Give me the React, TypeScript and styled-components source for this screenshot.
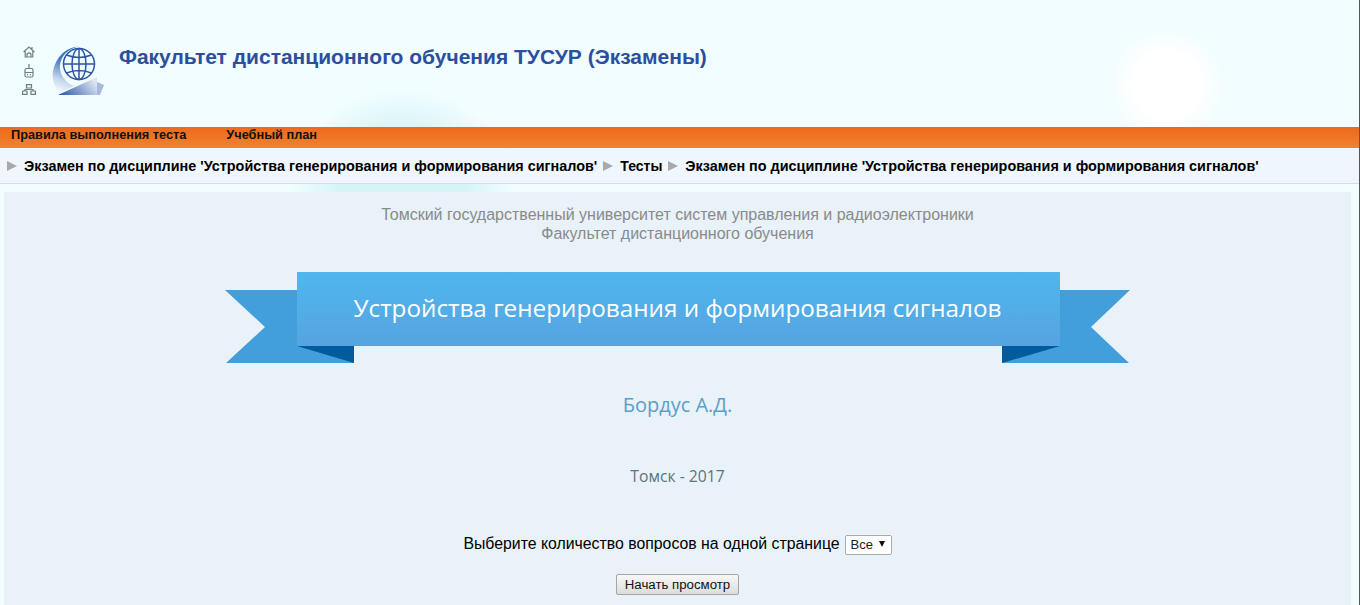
import styled, { createGlobalStyle } from 'styled-components';

const Global = createGlobalStyle`
  html, body {
    margin: 0;
    height: 100%;
    overflow: hidden;
  }
  body {
    font-family: "Liberation Sans", Arial, sans-serif;
    background: #fff;
  }
`;

export default function App() {
  return (
    <Page>
      <Global />
      <Header>
        <QuickLinks>
          <HomeIcon />
          <DeviceIcon />
          <MapIcon />
        </QuickLinks>
        <Logo />
        <Title>Факультет дистанционного обучения ТУСУР (Экзамены)</Title>
      </Header>
      <Menu>
        <MenuLink>Правила выполнения теста</MenuLink>
        <MenuLink>Учебный план</MenuLink>
      </Menu>
      <Crumbs>
        <Arrow />
        <Crumb>Экзамен по дисциплине 'Устройства генерирования и формирования сигналов'</Crumb>
        <Arrow />
        <Crumb $short>Тесты</Crumb>
        <Arrow />
        <Crumb>Экзамен по дисциплине 'Устройства генерирования и формирования сигналов'</Crumb>
      </Crumbs>
      <Panel>
        <University>
          Томский государственный университет систем управления и радиоэлектроники
          <br />
          Факультет дистанционного обучения
        </University>
        <Ribbon>
          <RibbonTails />
          <Banner>Устройства генерирования и формирования сигналов</Banner>
        </Ribbon>
        <Author>Бордус А.Д.</Author>
        <City>Томск - 2017</City>
        <PageSizeRow>
          Выберите количество вопросов на одной странице
          <SelectWrap>
            <PageSizeSelect defaultValue="all">
              <option value="all">Все</option>
              <option value="1">1</option>
              <option value="5">5</option>
              <option value="10">10</option>
            </PageSizeSelect>
            <SelectArrow />
          </SelectWrap>
        </PageSizeRow>
        <StartRow>
          <StartButton type="button">Начать просмотр</StartButton>
        </StartRow>
      </Panel>
    </Page>
  );
}

function HomeIcon() {
  return (
    <svg width="12" height="12" viewBox="0 0 12 12" fill="none" stroke="#6f8080" strokeWidth="1.2">
      <path d="M0.6 6 L6 1 L11.4 6 M2.2 4.8 V11 H9.8 V4.8 M9 1 V4 M4 11 V8 Q6 5.6 8 8 V11" />
    </svg>
  );
}

function DeviceIcon() {
  return (
    <svg width="12" height="14" viewBox="0 0 12 14" fill="none" stroke="#6f8080" strokeWidth="1.2">
      <path d="M6 0 V4 M3.5 4.5 H8.5 Q10 4.5 10 6 V11.5 Q10 13 8.5 13 H3.5 Q2 13 2 11.5 V6 Q2 4.5 3.5 4.5 Z M2 8.5 H10" />
      <path d="M4 10.7 H5 M7 10.7 H8" />
    </svg>
  );
}

function MapIcon() {
  return (
    <svg width="14" height="11" viewBox="0 0 14 11" fill="none" stroke="#6f8080" strokeWidth="1.2">
      <path d="M4.5 0.6 H9.5 V4 H4.5 Z M0.6 7 H5 V10.4 H0.6 Z M9 7 H13.4 V10.4 H9 Z M3 7 V5.5 H11 V7" />
    </svg>
  );
}

function Logo() {
  return (
    <LogoBox>
      <svg width="56" height="54" viewBox="0 0 56 54" fill="none">
        <defs>
          <linearGradient id="crescent" x1="0.6" y1="0" x2="0.4" y2="1">
            <stop offset="0" stopColor="#1a6fb8" />
            <stop offset="0.35" stopColor="#4a7fc0" />
            <stop offset="0.75" stopColor="#c8d8ee" />
            <stop offset="1" stopColor="#f4f8fc" />
          </linearGradient>
          <linearGradient id="book" x1="0" y1="0.8" x2="1" y2="0.4">
            <stop offset="0" stopColor="#2f5cab" />
            <stop offset="1" stopColor="#dfe6f3" />
          </linearGradient>
        </defs>
        <path d="M28 1.5 C12 3 2.5 18 2.7 32 C3 39 6 44 10 48 L24 41 C14 37 9 28 10 20 C11 11 18 4 28 1.5 Z" fill="url(#crescent)" />
        <path d="M8 50 L47 32 V50 Z" fill="url(#book)" />
        <path d="M47 37 L54 40 L50 50 H47 Z" fill="#a9b9da" />
        <g stroke="#2a55a5" strokeWidth="1.5">
          <circle cx="29" cy="19" r="15.5" />
          <ellipse cx="29" cy="19" rx="7" ry="15.5" />
          <path d="M29 3.5 V34.5 M13.5 19 H44.5 M16.5 10 Q29 15 41.5 10 M16.5 28 Q29 23 41.5 28" />
        </g>
      </svg>
    </LogoBox>
  );
}

function RibbonTails() {
  return (
    <TailsArt width="905" height="91" viewBox="0 0 905 91">
      <path d="M0 18 H129 V91 H1 L40 55 Z" fill="#429fdc" />
      <path d="M905 18 H777 V91 H904 L866 55 Z" fill="#429fdc" />
      <path d="M72 74 H129 V91 Z" fill="#015b9c" />
      <path d="M835 74 H777 V91 Z" fill="#015b9c" />
    </TailsArt>
  );
}

const Page = styled.div`
  box-sizing: border-box;
  width: 1360px;
  height: 605px;
  overflow: hidden;
  border-right: 1px solid #555;
  background:
    radial-gradient(ellipse 110px 100px at 402px 190px, #d4f4f6 55%, rgba(212, 244, 246, 0) 100%),
    radial-gradient(circle 60px at 1167px 85px, #fff 55%, rgba(255, 255, 255, 0) 100%),
    #f1fdff;
`;

const Header = styled.header`
  display: flex;
  align-items: flex-start;
  height: 127px;
`;

const QuickLinks = styled.div`
  display: flex;
  flex-direction: column;
  align-items: center;
  gap: 6px;
  width: 14px;
  margin: 46px 0 0 22px;
`;

const LogoBox = styled.div`
  width: 56px;
  height: 54px;
  margin: 45px 0 0 14px;
`;

const Title = styled.h1`
  margin: 45px 0 0 13px;
  font-size: 21px;
  line-height: 24px;
  font-weight: bold;
  color: #2b4f9e;
`;

const Menu = styled.nav`
  display: flex;
  gap: 40px;
  height: 21px;
  padding-left: 11px;
  background: linear-gradient(#ec691f, #f2822e);
`;

const MenuLink = styled.a`
  font-size: 12.75px;
  line-height: 16px;
  font-weight: bold;
  color: #111;
`;

const Crumbs = styled.div`
  display: flex;
  align-items: center;
  gap: 7px;
  box-sizing: border-box;
  height: 36px;
  padding-left: 7px;
  background: #eff6fe;
  border-bottom: 1px solid #d8dce0;
`;

const Arrow = styled.span`
  width: 0;
  height: 0;
  border-style: solid;
  border-width: 5px 0 5px 10px;
  border-color: transparent transparent transparent #a9a9a9;
`;

const Crumb = styled.a<{ $short?: boolean }>`
  font-size: ${(p) => (p.$short ? '14px' : '14.4px')};
  font-weight: bold;
  color: #000;
  margin-right: -1px;
`;

const Panel = styled.main`
  height: 413px;
  margin: 8px 8px 0 4px;
  background: #e9f2f8;
  display: flex;
  flex-direction: column;
  align-items: center;
`;

const University = styled.div`
  margin-top: 13px;
  font-size: 16px;
  line-height: 19px;
  text-align: center;
  color: #8a8a8a;
`;

const Ribbon = styled.div`
  position: relative;
  box-sizing: border-box;
  width: 905px;
  height: 91px;
  margin-top: 29px;
  padding: 0 70px 0 72px;
`;

const TailsArt = styled.svg`
  position: absolute;
  left: 0;
  top: 0;
`;

const Banner = styled.div`
  position: relative;
  box-sizing: border-box;
  height: 74px;
  padding: 0 2px 3px 0;
  display: flex;
  align-items: center;
  justify-content: center;
  background: linear-gradient(#50b6ee, #55a4e0);
  color: #fff;
  font-family: "Open Sans", sans-serif;
  font-size: 24.25px;
`;

const Author = styled.div`
  margin-top: 30px;
  font-family: "Open Sans", sans-serif;
  font-size: 20px;
  line-height: 24px;
  color: #5a9fcb;
`;

const City = styled.div`
  margin-top: 47px;
  font-family: "Open Sans", sans-serif;
  font-size: 15.7px;
  line-height: 24px;
  color: #5b7480;
`;

const PageSizeRow = styled.div`
  display: flex;
  align-items: center;
  gap: 5px;
  margin-top: 46px;
  font-size: 15.84px;
  line-height: 20px;
  color: #000;
`;

const SelectWrap = styled.div`
  position: relative;
  width: 47px;
  height: 20px;
`;

const PageSizeSelect = styled.select`
  appearance: none;
  box-sizing: border-box;
  width: 100%;
  height: 100%;
  padding: 0 0 0 5px;
  font-family: "Liberation Sans", Arial, sans-serif;
  font-size: 13px;
  color: #222;
  background: #fff;
  border: 1px solid #aaa;
  border-radius: 2px;
`;

const SelectArrow = styled.span`
  position: absolute;
  left: 34px;
  top: 7px;
  width: 0;
  height: 0;
  border-style: solid;
  border-width: 6px 3.5px 0;
  border-color: #111 transparent transparent;
  pointer-events: none;
`;

const StartRow = styled.div`
  margin-top: 20px;
`;

const StartButton = styled.button`
  width: 123px;
  height: 21px;
  padding: 0;
  font-family: "Liberation Sans", Arial, sans-serif;
  font-size: 13.25px;
  color: #111;
  background: linear-gradient(#f8f8f8, #dcdcdc);
  border: 1px solid #a5a5a5;
  border-radius: 2px;
`;
